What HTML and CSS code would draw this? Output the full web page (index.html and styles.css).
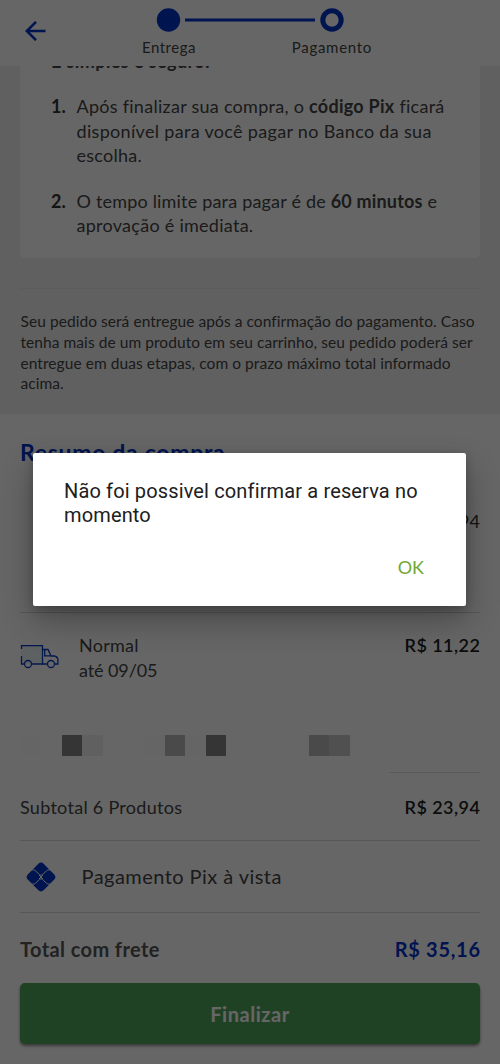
FILE: index.html
```html
<!DOCTYPE html>
<html lang="pt-BR">
<head>
<meta charset="utf-8">
<meta name="viewport" content="width=device-width, initial-scale=1">
<title>Pagamento</title>
<link rel="stylesheet" href="styles.css">
</head>
<body>
<div class="screen">
  <header class="topbar">
    <svg class="back" width="22" height="20" viewBox="0 0 22 20"><path d="M20.500 10H2M11 .8 1.800 10l9.200 9.200" fill="none" stroke="#0032c8" stroke-width="2.500"/></svg>
    <div class="steps">
      <svg class="track" width="204" height="24" viewBox="0 0 204 24"><circle cx="20.500" cy="12" r="11.700" fill="#0032c8"/><path d="M37 12h130" stroke="#0032c8" stroke-width="2.800"/><circle cx="184" cy="12" r="9.200" fill="none" stroke="#0032c8" stroke-width="5"/></svg>
      <div class="step-labels"><span class="s1">Entrega</span><span class="s2">Pagamento</span></div>
    </div>
  </header>
  <main class="scroll">
    <section class="info">
      <div class="card">
        <p class="card-title">É simples e seguro:</p>
        <div class="item"><b>1.</b><p><span>Após finalizar sua compra, o <b>código Pix</b> ficará</span><br><span class="l2">disponível para você pagar no Banco da sua</span><br><span>escolha.</span></p></div>
        <div class="item"><b>2.</b><p><span class="l3">O tempo limite para pagar é de <b>60 minutos</b> e</span><br><span>aprovação é imediata.</span></p></div>
      </div>
      <p class="note">Seu pedido será entregue após a confirmação do pagamento. Caso<br>tenha mais de um produto em seu carrinho, seu pedido poderá ser<br>entregue em duas etapas, com o prazo máximo total informado<br>acima.</p>
    </section>
    <section class="summary">
      <h2><span>Resumo da compra</span></h2>
      <div class="product"><span>R$ 23,94</span></div>
      <div class="shipping">
        <svg class="truck" width="40" height="26" viewBox="0 0 40 26"><path d="M1 2h22v18H1z" fill="#e8f2f6"/><g fill="none" stroke="#0a3cc0" stroke-width="1.300"><path d="M1.500 5V1.700H22.500V20H11.800M1.500 12v8h3"/><path d="M22.500 5.500h5.500l3 6.500h3.500q3.400.8 3.400 4V20h-3.300M22.500 20h4.400M24 11.800h7M24.700 6v5.800"/><circle cx="8" cy="20" r="3.500"/><circle cx="31" cy="20" r="3.500"/></g></svg>
        <p><span class="nm">Normal</span><br><span class="dt">até 09/05</span></p>
        <strong class="price">R$ 11,22</strong>
      </div>
      <div class="mosaic"><i class="t1"></i><i></i><i class="t5"></i><i class="t2"></i><i></i><i></i><i class="t1"></i><i class="t4"></i><i class="t1"></i><i class="t5"></i><i></i><i></i><i></i><i></i><i class="t4"></i><i class="t3"></i></div>
      <div class="short-rule"></div>
      <div class="row subtotal"><span class="st">Subtotal 6 Produtos</span><strong class="price">R$ 23,94</strong></div>
      <div class="row pix">
        <svg width="32" height="32" viewBox="0 0 32 32"><rect x="4.800" y="4.800" width="22.400" height="22.400" rx="4" transform="rotate(45 16 16)" fill="#0032c8"/><path d="M3.500 8.800h4q2 0 3.200 1.200L14.500 13.600q1.500 1.300 3 0L21.300 10q1.200-1.200 3.200-1.200h4M3.500 23.200h4q2 0 3.200-1.200l3.800-3.600q1.500-1.300 3 0l3.800 3.600q1.200 1.200 3.200 1.200h4M14 14l4 4M18 14l-4 4" fill="none" stroke="#fff" stroke-width="1"/></svg>
        <span class="px">Pagamento Pix à vista</span>
      </div>
      <div class="row total"><strong class="tt">Total com frete</strong><strong class="sum">R$ 35,16</strong></div>
      <button class="finish"><span>Finalizar</span></button>
    </section>
  </main>
</div>
<div class="scrim">
  <div class="dialog" role="alertdialog">
    <p>Não foi possivel confirmar a reserva no<br>momento</p>
    <button class="ok">OK</button>
  </div>
</div>
</body>
</html>
```

FILE: styles.css
```css
* { box-sizing: border-box; }
body { margin: 0; font-family: Lato, "Open Sans", sans-serif; color: #444; }
p, h2 { margin: 0; font-weight: 400; }
button { border: 0; padding: 0; font-family: inherit; }
svg { display: block; flex: none; }
.screen { height: 1064px; overflow: hidden; display: flex; flex-direction: column; background: #fff; }
.topbar { height: 66px; flex: none; display: flex; padding: 8px 0 0 25px; }
.back { margin-top: 13px; }
.steps { margin-left: 101px; width: 250px; }
.step-labels { display: flex; justify-content: space-between; width: 230px; margin-top: 4px; margin-left: -6px; font-size: 15px; line-height: 22px; white-space: nowrap; }
.s1 { letter-spacing: .5px; }
.s2 { letter-spacing: .7px; }
.scroll { flex: 1; overflow: hidden; }
.info { height: 348px; padding: 0 20px; background: #f0f0f0; }
.card { height: 192px; margin-bottom: 31px; padding: 0 0 0 31px; background: #fff; border-radius: 0 0 5px 5px; overflow: hidden; }
.card-title { height: 29px; margin-top: -17px; line-height: 24px; font-size: 18px; font-weight: 700; letter-spacing: .4px; }
.item { display: flex; margin-bottom: 20.500px; font-size: 18px; line-height: 24.700px; letter-spacing: .27px; white-space: nowrap; }
.item:nth-child(2) { padding-top: 16px; }
.item > b { width: 25.500px; flex: none; color: #333; letter-spacing: 0; }
.l2 { letter-spacing: .32px; }
.l3 { letter-spacing: .19px; }
.note { margin-top: -1px; border-top: 1px solid #e6e6e6; padding-top: 22px; font-size: 15.500px; line-height: 20.800px; letter-spacing: .06px; white-space: nowrap; }
.card + .note { padding-left: .5px; }
.summary { padding: 0 20px; }
h2 { height: 77px; padding-top: 24px; font-size: 23px; line-height: 28px; font-weight: 700; letter-spacing: .7px; color: #0032c8; }
.product { height: 122px; padding-top: 18px; border-bottom: 1px solid #d9d9d9; text-align: right; font-size: 18px; line-height: 24px; color: #333; }
.shipping { height: 122px; display: flex; padding-top: 20px; font-size: 18px; line-height: 25px; }
.truck { margin-top: 11px; }
.shipping p { margin-left: 19px; }
.nm { letter-spacing: .25px; }
.dt { letter-spacing: -.1px; }
.price { margin-left: auto; margin-right: -.4px; font-size: 18px; font-weight: 600; letter-spacing: .45px; color: #222; }
.mosaic { display: grid; grid-template-columns: repeat(16, 20.600px); height: 21px; margin-left: .5px; }
.t1 { background: #fcfcfc; }
.t2 { background: #efefef; }
.t3 { background: #c9c9c9; }
.t4 { background: #b8b8b8; }
.t5 { background: #858585; }
.short-rule { width: 91px; height: 17px; margin-left: auto; border-bottom: 1px solid #e2e2e2; }
.row { display: flex; align-items: center; border-bottom: 1px solid #d9d9d9; }
.subtotal { height: 68px; padding-top: 1px; font-size: 18px; }
.st { letter-spacing: .28px; }
.pix { height: 72px; padding-left: 5px; font-size: 20px; }
.px { margin: -2px 0 0 24.500px; letter-spacing: .45px; }
.total { height: 70px; padding-top: 1px; border: 0; justify-content: space-between; font-size: 20px; color: #555; }
.tt { letter-spacing: .4px; }
.sum { margin-right: -.7px; color: #0032c8; letter-spacing: .7px; }
.finish { display: block; width: 460px; height: 61px; border-radius: 5px; background: #50a55a; color: #fff; font-size: 20px; font-weight: 700; letter-spacing: .55px; box-shadow: 0 2px 3px rgba(0,0,0,.45); }
.scrim { position: absolute; top: 0; left: 0; width: 500px; height: 1064px; display: flex; flex-direction: column; align-items: center; padding-top: 453px; background: rgba(0,0,0,.6); }
.dialog { width: 433px; height: 153px; margin-left: -1px; padding: 26px 31px; border-radius: 2px; background: #fff; box-shadow: 0 14px 32px rgba(0,0,0,.3), 0 3px 10px rgba(0,0,0,.2); font-family: Roboto, sans-serif; color: #202020; }
.dialog p { font-size: 20px; line-height: 24px; letter-spacing: .14px; white-space: nowrap; }
.ok { display: block; margin: 28px 11px 0 auto; background: none; color: #70a832; font-family: Lato, sans-serif; font-size: 18px; line-height: 24px; }
```
